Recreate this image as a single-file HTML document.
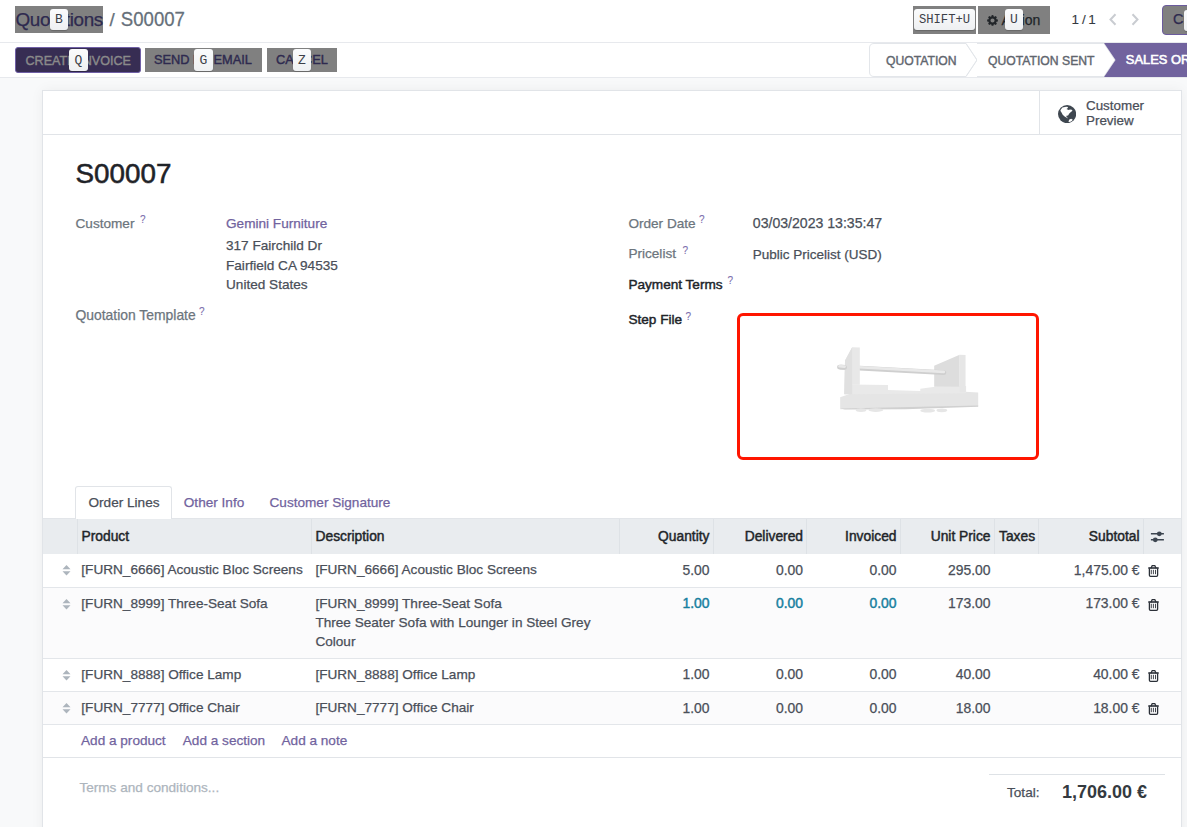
<!DOCTYPE html>
<html><head><meta charset="utf-8"><style>
html,body{margin:0;padding:0;width:1187px;height:827px;overflow:hidden;background:#fff;position:relative;font-family:"Liberation Sans",sans-serif}
.t{position:absolute;line-height:1;white-space:nowrap;-webkit-text-stroke:0.25px currentColor}
.r{position:absolute}
.key{position:absolute;background:linear-gradient(#fafbfc,#eef0f2);border-radius:3px;box-shadow:0 1px 1px rgba(0,0,0,.2);font-family:"Liberation Mono",monospace;font-size:13px;color:#3c4048;display:flex;align-items:center;justify-content:center;box-sizing:border-box}
</style></head><body>
<div class="r" style="left:0px;top:0px;width:1187px;height:42px;background:#fff"></div>
<div class="r" style="left:0px;top:42px;width:1187px;height:1px;background:#e7e9ed"></div>
<div class="r" style="left:0px;top:43px;width:1187px;height:34px;background:#fff"></div>
<div class="r" style="left:0px;top:77px;width:1187px;height:1px;background:#e7e9ed"></div>
<div class="r" style="left:15px;top:6px;width:88px;height:27px;background:#808080"></div>
<div class="t" style="left:15.50px;top:11.20px;font-size:18.9px;font-weight:400;color:#2e2a4f;font-family:'Liberation Sans', sans-serif;letter-spacing:-0.4px">Quotations</div>
<div class="t" style="left:109.50px;top:11.20px;font-size:18.9px;font-weight:400;color:#66707a;font-family:'Liberation Sans', sans-serif;">/</div>
<div class="t" style="left:120.80px;top:11.46px;font-size:18.6px;font-weight:400;color:#66707a;font-family:'Liberation Sans', sans-serif;transform:scaleY(1.04);transform-origin:0 100%">S00007</div>
<div class="key" style="left:50px;top:9px;width:18px;height:21px;">B</div>
<div class="r" style="left:913px;top:6px;width:63px;height:28px;background:#808080"></div>
<div class="key" style="left:914px;top:9px;width:61px;height:21px;font-size:12.2px;padding-top:1.5px">SHIFT+U</div>
<div class="r" style="left:978px;top:6px;width:72px;height:28px;background:#808080"></div>
<div class="t" style="left:1001.40px;top:12.95px;font-size:14px;font-weight:400;color:#212529;font-family:'Liberation Sans', sans-serif;">Action</div>
<svg class="r" style="left:987px;top:14.5px" width="11" height="11" viewBox="0 0 16 16"><path fill="#212529" d="M8 0l1.3 .2.4 2 1.2.5 1.7-1.1 1.8 1.8-1.1 1.7.5 1.2 2 .4V9.3l-2 .4-.5 1.2 1.1 1.7-1.8 1.8-1.7-1.1-1.2.5-.4 2H6.7l-.4-2-1.2-.5-1.7 1.1-1.8-1.8 1.1-1.7-.5-1.2-2-.4V6.7l2-.4.5-1.2L1.6 3.4 3.4 1.6l1.7 1.1 1.2-.5.4-2zM8 5a3 3 0 100 6 3 3 0 000-6z"/></svg>
<div class="key" style="left:1005px;top:9px;width:18px;height:21px;">U</div>
<div class="t" style="left:1071.50px;top:13.37px;font-size:13.5px;font-weight:400;color:#343a40;font-family:'Liberation Sans', sans-serif;-webkit-text-stroke:0.1px">1</div>
<div class="t" style="left:1082.00px;top:13.37px;font-size:13.5px;font-weight:400;color:#343a40;font-family:'Liberation Sans', sans-serif;-webkit-text-stroke:0.1px">/</div>
<div class="t" style="left:1088.30px;top:13.37px;font-size:13.5px;font-weight:400;color:#343a40;font-family:'Liberation Sans', sans-serif;-webkit-text-stroke:0.1px">1</div>
<svg class="r" style="left:1108px;top:13px" width="10" height="13" viewBox="0 0 10 13"><path d="M7.5 1.2L2.5 6.5 7.5 11.8" stroke="#c9ccd1" stroke-width="2" fill="none"/></svg>
<svg class="r" style="left:1130px;top:13px" width="10" height="13" viewBox="0 0 10 13"><path d="M2.5 1.2L7.5 6.5 2.5 11.8" stroke="#c9ccd1" stroke-width="2" fill="none"/></svg>
<div class="r" style="left:1162px;top:5px;width:40px;height:30px;background:#808080;border:1.5px solid #6b5b9e;border-radius:4px;box-sizing:border-box"></div>
<div class="t" style="left:1172.90px;top:12.23px;font-size:14.5px;font-weight:400;color:#2e2a4f;font-family:'Liberation Sans', sans-serif;">Cr</div>
<div class="key" style="left:1183.5px;top:9.5px;width:18px;height:21px;"></div>
<div class="r" style="left:15px;top:47px;width:126px;height:26px;background:#372d53;border:1px solid #6f5fa6;border-radius:3px;box-sizing:border-box"></div>
<div class="t" style="left:25.50px;top:54.63px;font-size:12.6px;font-weight:400;color:#8a8a8a;font-family:'Liberation Sans', sans-serif;-webkit-text-stroke:0.4px #8a8a8a">CREATE INVOICE</div>
<div class="key" style="left:69px;top:49px;width:19px;height:22px;">Q</div>
<div class="r" style="left:145px;top:48px;width:117px;height:24px;background:#808080"></div>
<div class="t" style="left:154.00px;top:54.46px;font-size:12.8px;font-weight:400;color:#2e2a4f;font-family:'Liberation Sans', sans-serif;-webkit-text-stroke:0.4px #2e2a4f">SEND BY EMAIL</div>
<div class="key" style="left:194px;top:49px;width:19px;height:22px;">G</div>
<div class="r" style="left:267px;top:48px;width:70px;height:24px;background:#808080"></div>
<div class="t" style="left:276.00px;top:54.46px;font-size:12.8px;font-weight:400;color:#2e2a4f;font-family:'Liberation Sans', sans-serif;-webkit-text-stroke:0.4px #2e2a4f">CANCEL</div>
<div class="key" style="left:293px;top:49px;width:18px;height:22px;">Z</div>
<svg class="r" style="left:860px;top:43px" width="327" height="34" viewBox="860 43 327 34">
<path d="M874 43.5 H966 L977 60 L966 76.5 H874 Q869.5 76.5 869.5 72 V48 Q869.5 43.5 874 43.5Z" fill="#fff" stroke="#e3e6ea" stroke-width="1"/>
<path d="M966 43.5 L977 60 L966 76.5" fill="none" stroke="#e3e6ea" stroke-width="1"/>
<path d="M977 43.5 H1104 L1115 60 L1104 76.5 H977" fill="#fff" stroke="#e3e6ea" stroke-width="1"/>
<path d="M1104 43 H1187 V77 H1104 L1115.5 60 Z" fill="#71639e"/>
</svg>
<div class="t" style="left:886.00px;top:54.57px;font-size:12.2px;font-weight:400;color:#5f666e;font-family:'Liberation Sans', sans-serif;-webkit-text-stroke:0.4px #5f666e">QUOTATION</div>
<div class="t" style="left:988.00px;top:54.57px;font-size:12.2px;font-weight:400;color:#5f666e;font-family:'Liberation Sans', sans-serif;-webkit-text-stroke:0.4px #5f666e">QUOTATION SENT</div>
<div class="t" style="left:1125.80px;top:53.98px;font-size:12.9px;font-weight:400;color:#ffffff;font-family:'Liberation Sans', sans-serif;-webkit-text-stroke:0.6px #ffffff">SALES ORDER</div>
<div class="r" style="left:0px;top:78px;width:1187px;height:749px;background:#f8f9fa"></div>
<div class="r" style="left:42px;top:90px;width:1140px;height:760px;background:#fff;border:1px solid #e1e4e8;box-sizing:border-box;box-shadow:0 0 12px rgba(0,0,0,0.05)"></div>
<div class="r" style="left:43px;top:134px;width:1138px;height:1px;background:#e1e4e8"></div>
<div class="r" style="left:1039px;top:91px;width:1px;height:43px;background:#e1e4e8"></div>
<svg class="r" style="left:1057.8px;top:104.5px" width="18.2" height="18.2" viewBox="0 0 18.2 18.2"><circle cx="9.1" cy="9.1" r="9.1" fill="#3f4750"/><path d="M2.5 5L4.4 2.5 8.2 1.7 10.1 2 9.4 3.5 8.4 4.1 10.7 5 11.9 4.4 13.8 4.7 14.5 5.7 12.6 7.2 11.3 8.5 10.1 10.4 8.5 10.7 8.2 11.3 9.7 12.9 10.1 13.5 6.6 11.6 4.7 9.7 3.5 7.5 2.5 5.9Z M10.4 16.7L11.3 14.5 13.2 13.7 14.8 14.8 13.8 16 11.9 17Z" fill="#fff"/></svg>
<div class="t" style="left:1086.00px;top:98.96px;font-size:13.4px;font-weight:400;color:#4a4f59;font-family:'Liberation Sans', sans-serif;">Customer</div>
<div class="t" style="left:1086.00px;top:113.96px;font-size:13.4px;font-weight:400;color:#4a4f59;font-family:'Liberation Sans', sans-serif;">Preview</div>
<div class="t" style="left:75.50px;top:159.67px;font-size:27.8px;font-weight:400;color:#1f2328;font-family:'Liberation Sans', sans-serif;-webkit-text-stroke:0.55px #1f2328">S00007</div>
<div class="t" style="left:75.50px;top:216.79px;font-size:13.6px;font-weight:400;color:#6c757d;font-family:'Liberation Sans', sans-serif;">Customer</div>
<div class="t" style="left:140.00px;top:215.03px;font-size:10px;font-weight:400;color:#7c6fae;font-family:'Liberation Sans', sans-serif;-webkit-text-stroke:0.1px #7c6fae">?</div>
<div class="t" style="left:226.00px;top:217.29px;font-size:13.6px;font-weight:400;color:#71639e;font-family:'Liberation Sans', sans-serif;">Gemini Furniture</div>
<div class="t" style="left:226.00px;top:238.99px;font-size:13.6px;font-weight:400;color:#4a4f59;font-family:'Liberation Sans', sans-serif;">317 Fairchild Dr</div>
<div class="t" style="left:226.00px;top:258.69px;font-size:13.6px;font-weight:400;color:#4a4f59;font-family:'Liberation Sans', sans-serif;">Fairfield CA 94535</div>
<div class="t" style="left:226.00px;top:278.09px;font-size:13.6px;font-weight:400;color:#4a4f59;font-family:'Liberation Sans', sans-serif;">United States</div>
<div class="t" style="left:75.50px;top:308.53px;font-size:13.9px;font-weight:400;color:#6c757d;font-family:'Liberation Sans', sans-serif;">Quotation Template</div>
<div class="t" style="left:199.00px;top:307.04px;font-size:10px;font-weight:400;color:#7c6fae;font-family:'Liberation Sans', sans-serif;-webkit-text-stroke:0.1px #7c6fae">?</div>
<div class="t" style="left:628.40px;top:216.79px;font-size:13.6px;font-weight:400;color:#6c757d;font-family:'Liberation Sans', sans-serif;">Order Date</div>
<div class="t" style="left:699.00px;top:214.53px;font-size:10px;font-weight:400;color:#7c6fae;font-family:'Liberation Sans', sans-serif;-webkit-text-stroke:0.1px #7c6fae">?</div>
<div class="t" style="left:752.80px;top:216.36px;font-size:14.1px;font-weight:400;color:#4a4f59;font-family:'Liberation Sans', sans-serif;">03/03/2023 13:35:47</div>
<div class="t" style="left:628.40px;top:247.49px;font-size:13.6px;font-weight:400;color:#6c757d;font-family:'Liberation Sans', sans-serif;">Pricelist</div>
<div class="t" style="left:682.50px;top:245.53px;font-size:10px;font-weight:400;color:#7c6fae;font-family:'Liberation Sans', sans-serif;-webkit-text-stroke:0.1px #7c6fae">?</div>
<div class="t" style="left:752.80px;top:247.57px;font-size:13.5px;font-weight:400;color:#4a4f59;font-family:'Liberation Sans', sans-serif;">Public Pricelist (USD)</div>
<div class="t" style="left:628.40px;top:277.99px;font-size:13.6px;font-weight:400;color:#212529;font-family:'Liberation Sans', sans-serif;-webkit-text-stroke:0.45px #212529">Payment Terms</div>
<div class="t" style="left:727.50px;top:276.04px;font-size:10px;font-weight:400;color:#7c6fae;font-family:'Liberation Sans', sans-serif;-webkit-text-stroke:0.1px #7c6fae">?</div>
<div class="t" style="left:628.40px;top:313.49px;font-size:13.6px;font-weight:400;color:#212529;font-family:'Liberation Sans', sans-serif;-webkit-text-stroke:0.45px #212529">Step File</div>
<div class="t" style="left:685.50px;top:311.54px;font-size:10px;font-weight:400;color:#7c6fae;font-family:'Liberation Sans', sans-serif;-webkit-text-stroke:0.1px #7c6fae">?</div>
<div class="r" style="left:737px;top:313px;width:302px;height:147px;border:3px solid #ff1500;border-radius:6px;box-sizing:border-box"></div>
<svg class="r" style="left:830px;top:340px" width="160" height="80" viewBox="0 0 1187 594">
<polygon points="75,425 150,400 1000,385 1100,390 1100,492 75,515" fill="#e5e5e5"/>
<polygon points="75,508 1100,486 1100,496 560,514 110,516" fill="#d0d0d0"/>
<polygon points="150,330 430,335 430,372 670,378 670,362 780,348 1010,342 1010,395 150,402" fill="#e9e9e9"/>
<polygon points="773,191 962,109 962,347 773,347" fill="#dddddd"/>
<polygon points="962,109 1006,111 1006,388 962,388" fill="#e6e6e6"/>
<path d="M80,201 L845,242" stroke="#cfcfcf" stroke-width="36" stroke-linecap="round"/>
<path d="M80,195 L845,236" stroke="#e9e9e9" stroke-width="20" stroke-linecap="round"/>
<polygon points="111,153 164,53 221,55 221,332 150,332 150,402 105,402" fill="#e8e8e8"/>
<polygon points="111,153 164,53 164,402 105,402" fill="#e0e0e0"/>
<path d="M70,201 L108,203" stroke="#cfcfcf" stroke-width="36" stroke-linecap="round"/>
<path d="M70,195 L108,197" stroke="#e9e9e9" stroke-width="20" stroke-linecap="round"/>
<ellipse cx="230" cy="520" rx="40" ry="14" fill="#e6e6e6"/>
<ellipse cx="340" cy="520" rx="55" ry="14" fill="#e6e6e6"/>
<ellipse cx="725" cy="525" rx="55" ry="14" fill="#e6e6e6"/>
<ellipse cx="830" cy="522" rx="40" ry="14" fill="#e6e6e6"/>
</svg>
<div class="r" style="left:75px;top:486px;width:97px;height:33px;background:#fff;border:1px solid #e1e4e8;border-bottom:none;border-radius:3px 3px 0 0;box-sizing:border-box"></div>
<div class="t" style="left:88.50px;top:496.09px;font-size:13.6px;font-weight:400;color:#4a4f59;font-family:'Liberation Sans', sans-serif;">Order Lines</div>
<div class="t" style="left:183.80px;top:496.09px;font-size:13.6px;font-weight:400;color:#71639e;font-family:'Liberation Sans', sans-serif;">Other Info</div>
<div class="t" style="left:269.50px;top:496.09px;font-size:13.6px;font-weight:400;color:#71639e;font-family:'Liberation Sans', sans-serif;">Customer Signature</div>
<div class="r" style="left:43px;top:519px;width:1138px;height:35px;background:#e9ecef"></div>
<div class="r" style="left:43px;top:518px;width:32px;height:1px;background:#e2e5e9"></div>
<div class="r" style="left:172px;top:518px;width:1009px;height:1px;background:#e2e5e9"></div>
<div class="r" style="left:77px;top:519px;width:1px;height:35px;background:#dee2e6"></div>
<div class="r" style="left:311px;top:519px;width:1px;height:35px;background:#dee2e6"></div>
<div class="r" style="left:619px;top:519px;width:1px;height:35px;background:#dee2e6"></div>
<div class="r" style="left:713px;top:519px;width:1px;height:35px;background:#dee2e6"></div>
<div class="r" style="left:806px;top:519px;width:1px;height:35px;background:#dee2e6"></div>
<div class="r" style="left:900px;top:519px;width:1px;height:35px;background:#dee2e6"></div>
<div class="r" style="left:994px;top:519px;width:1px;height:35px;background:#dee2e6"></div>
<div class="r" style="left:1038px;top:519px;width:1px;height:35px;background:#dee2e6"></div>
<div class="r" style="left:1143px;top:519px;width:1px;height:35px;background:#dee2e6"></div>
<div class="t" style="left:81.50px;top:529.82px;font-size:13.8px;font-weight:400;color:#212529;font-family:'Liberation Sans', sans-serif;-webkit-text-stroke:0.45px #212529">Product</div>
<div class="t" style="left:315.50px;top:529.82px;font-size:13.8px;font-weight:400;color:#212529;font-family:'Liberation Sans', sans-serif;-webkit-text-stroke:0.45px #212529">Description</div>
<div class="t" style="right:477.50px;top:529.82px;font-size:13.8px;font-weight:400;color:#212529;font-family:'Liberation Sans', sans-serif;-webkit-text-stroke:0.45px #212529">Quantity</div>
<div class="t" style="right:384.00px;top:529.82px;font-size:13.8px;font-weight:400;color:#212529;font-family:'Liberation Sans', sans-serif;-webkit-text-stroke:0.45px #212529">Delivered</div>
<div class="t" style="right:290.50px;top:529.82px;font-size:13.8px;font-weight:400;color:#212529;font-family:'Liberation Sans', sans-serif;-webkit-text-stroke:0.45px #212529">Invoiced</div>
<div class="t" style="right:196.50px;top:529.82px;font-size:13.8px;font-weight:400;color:#212529;font-family:'Liberation Sans', sans-serif;-webkit-text-stroke:0.45px #212529">Unit Price</div>
<div class="t" style="left:999.00px;top:529.82px;font-size:13.8px;font-weight:400;color:#212529;font-family:'Liberation Sans', sans-serif;-webkit-text-stroke:0.45px #212529">Taxes</div>
<div class="t" style="right:47.50px;top:529.82px;font-size:13.8px;font-weight:400;color:#212529;font-family:'Liberation Sans', sans-serif;-webkit-text-stroke:0.45px #212529">Subtotal</div>
<svg class="r" style="left:1150px;top:530px" width="15" height="13" viewBox="0 0 15 13"><path d="M0.9 3.8h13M0.9 9.8h13" stroke="#3c4550" stroke-width="1.5"/><circle cx="9.3" cy="3.8" r="2.4" fill="#3c4550"/><circle cx="5.3" cy="9.8" r="2.4" fill="#3c4550"/></svg>
<div class="r" style="left:43px;top:554px;width:1138px;height:33px;background:#fff"></div>
<div class="r" style="left:43px;top:587px;width:1138px;height:71px;background:#fbfbfc"></div>
<div class="r" style="left:43px;top:658px;width:1138px;height:33px;background:#fff"></div>
<div class="r" style="left:43px;top:691px;width:1138px;height:33px;background:#fbfbfc"></div>
<div class="r" style="left:43px;top:587px;width:1138px;height:1px;background:#e3e6ea"></div>
<div class="r" style="left:43px;top:658px;width:1138px;height:1px;background:#e3e6ea"></div>
<div class="r" style="left:43px;top:691px;width:1138px;height:1px;background:#e3e6ea"></div>
<div class="r" style="left:43px;top:724px;width:1138px;height:1px;background:#e3e6ea"></div>
<svg class="r" style="left:62px;top:564.9px" width="9" height="11" viewBox="0 0 9 11"><path d="M4.5 0L8.5 4.3H0.5Z M0.5 6.2H8.5L4.5 10.5Z" fill="#adb5bd"/></svg>
<div class="t" style="left:81.30px;top:563.39px;font-size:13.6px;font-weight:400;color:#4a4f59;font-family:'Liberation Sans', sans-serif;">[FURN_6666] Acoustic Bloc Screens</div>
<div class="t" style="left:315.40px;top:563.39px;font-size:13.6px;font-weight:400;color:#4a4f59;font-family:'Liberation Sans', sans-serif;">[FURN_6666] Acoustic Bloc Screens</div>
<div class="t" style="right:477.50px;top:563.53px;font-size:13.9px;font-weight:400;color:#4a4f59;font-family:'Liberation Sans', sans-serif;">5.00</div>
<div class="t" style="right:384.00px;top:563.53px;font-size:13.9px;font-weight:400;color:#4a4f59;font-family:'Liberation Sans', sans-serif;">0.00</div>
<div class="t" style="right:290.50px;top:563.53px;font-size:13.9px;font-weight:400;color:#4a4f59;font-family:'Liberation Sans', sans-serif;">0.00</div>
<div class="t" style="right:196.50px;top:563.53px;font-size:13.9px;font-weight:400;color:#4a4f59;font-family:'Liberation Sans', sans-serif;">295.00</div>
<div class="t" style="right:47.50px;top:563.53px;font-size:13.9px;font-weight:400;color:#4a4f59;font-family:'Liberation Sans', sans-serif;">1,475.00 €</div>
<svg class="r" style="left:1147.5px;top:563.9px" width="11" height="13" viewBox="0 0 11 13"><path d="M0.3 4H10.7" stroke="#2b3038" stroke-width="1.6"/><path d="M3 4.2L4.2 1.6H6.8L8 4.2" stroke="#2b3038" stroke-width="1.3" fill="none"/><path d="M1.4 4.2V11.2Q1.4 12.3 2.5 12.3H8.5Q9.6 12.3 9.6 11.2V4.2" stroke="#2b3038" stroke-width="1.3" fill="none"/><path d="M3.3 5.8V10.2M5.4 5.8V10.2M7.5 5.8V10.2" stroke="#2b3038" stroke-width="0.9"/></svg>
<svg class="r" style="left:62px;top:598.5px" width="9" height="11" viewBox="0 0 9 11"><path d="M4.5 0L8.5 4.3H0.5Z M0.5 6.2H8.5L4.5 10.5Z" fill="#adb5bd"/></svg>
<div class="t" style="left:81.30px;top:596.99px;font-size:13.6px;font-weight:400;color:#4a4f59;font-family:'Liberation Sans', sans-serif;">[FURN_8999] Three-Seat Sofa</div>
<div class="t" style="left:315.40px;top:596.99px;font-size:13.6px;font-weight:400;color:#4a4f59;font-family:'Liberation Sans', sans-serif;">[FURN_8999] Three-Seat Sofa</div>
<div class="t" style="left:315.40px;top:616.19px;font-size:13.6px;font-weight:400;color:#4a4f59;font-family:'Liberation Sans', sans-serif;">Three Seater Sofa with Lounger in Steel Grey</div>
<div class="t" style="left:315.40px;top:635.39px;font-size:13.6px;font-weight:400;color:#4a4f59;font-family:'Liberation Sans', sans-serif;">Colour</div>
<div class="t" style="right:477.50px;top:597.13px;font-size:13.9px;font-weight:400;color:#17809f;font-family:'Liberation Sans', sans-serif;-webkit-text-stroke:0.45px #17809f">1.00</div>
<div class="t" style="right:384.00px;top:597.13px;font-size:13.9px;font-weight:400;color:#17809f;font-family:'Liberation Sans', sans-serif;-webkit-text-stroke:0.45px #17809f">0.00</div>
<div class="t" style="right:290.50px;top:597.13px;font-size:13.9px;font-weight:400;color:#17809f;font-family:'Liberation Sans', sans-serif;-webkit-text-stroke:0.45px #17809f">0.00</div>
<div class="t" style="right:196.50px;top:597.13px;font-size:13.9px;font-weight:400;color:#4a4f59;font-family:'Liberation Sans', sans-serif;">173.00</div>
<div class="t" style="right:47.50px;top:597.13px;font-size:13.9px;font-weight:400;color:#4a4f59;font-family:'Liberation Sans', sans-serif;">173.00 €</div>
<svg class="r" style="left:1147.5px;top:597.5px" width="11" height="13" viewBox="0 0 11 13"><path d="M0.3 4H10.7" stroke="#2b3038" stroke-width="1.6"/><path d="M3 4.2L4.2 1.6H6.8L8 4.2" stroke="#2b3038" stroke-width="1.3" fill="none"/><path d="M1.4 4.2V11.2Q1.4 12.3 2.5 12.3H8.5Q9.6 12.3 9.6 11.2V4.2" stroke="#2b3038" stroke-width="1.3" fill="none"/><path d="M3.3 5.8V10.2M5.4 5.8V10.2M7.5 5.8V10.2" stroke="#2b3038" stroke-width="0.9"/></svg>
<svg class="r" style="left:62px;top:669.7px" width="9" height="11" viewBox="0 0 9 11"><path d="M4.5 0L8.5 4.3H0.5Z M0.5 6.2H8.5L4.5 10.5Z" fill="#adb5bd"/></svg>
<div class="t" style="left:81.30px;top:668.19px;font-size:13.6px;font-weight:400;color:#4a4f59;font-family:'Liberation Sans', sans-serif;">[FURN_8888] Office Lamp</div>
<div class="t" style="left:315.40px;top:668.19px;font-size:13.6px;font-weight:400;color:#4a4f59;font-family:'Liberation Sans', sans-serif;">[FURN_8888] Office Lamp</div>
<div class="t" style="right:477.50px;top:668.33px;font-size:13.9px;font-weight:400;color:#4a4f59;font-family:'Liberation Sans', sans-serif;">1.00</div>
<div class="t" style="right:384.00px;top:668.33px;font-size:13.9px;font-weight:400;color:#4a4f59;font-family:'Liberation Sans', sans-serif;">0.00</div>
<div class="t" style="right:290.50px;top:668.33px;font-size:13.9px;font-weight:400;color:#4a4f59;font-family:'Liberation Sans', sans-serif;">0.00</div>
<div class="t" style="right:196.50px;top:668.33px;font-size:13.9px;font-weight:400;color:#4a4f59;font-family:'Liberation Sans', sans-serif;">40.00</div>
<div class="t" style="right:47.50px;top:668.33px;font-size:13.9px;font-weight:400;color:#4a4f59;font-family:'Liberation Sans', sans-serif;">40.00 €</div>
<svg class="r" style="left:1147.5px;top:668.7px" width="11" height="13" viewBox="0 0 11 13"><path d="M0.3 4H10.7" stroke="#2b3038" stroke-width="1.6"/><path d="M3 4.2L4.2 1.6H6.8L8 4.2" stroke="#2b3038" stroke-width="1.3" fill="none"/><path d="M1.4 4.2V11.2Q1.4 12.3 2.5 12.3H8.5Q9.6 12.3 9.6 11.2V4.2" stroke="#2b3038" stroke-width="1.3" fill="none"/><path d="M3.3 5.8V10.2M5.4 5.8V10.2M7.5 5.8V10.2" stroke="#2b3038" stroke-width="0.9"/></svg>
<svg class="r" style="left:62px;top:703px" width="9" height="11" viewBox="0 0 9 11"><path d="M4.5 0L8.5 4.3H0.5Z M0.5 6.2H8.5L4.5 10.5Z" fill="#adb5bd"/></svg>
<div class="t" style="left:81.30px;top:701.49px;font-size:13.6px;font-weight:400;color:#4a4f59;font-family:'Liberation Sans', sans-serif;">[FURN_7777] Office Chair</div>
<div class="t" style="left:315.40px;top:701.49px;font-size:13.6px;font-weight:400;color:#4a4f59;font-family:'Liberation Sans', sans-serif;">[FURN_7777] Office Chair</div>
<div class="t" style="right:477.50px;top:701.63px;font-size:13.9px;font-weight:400;color:#4a4f59;font-family:'Liberation Sans', sans-serif;">1.00</div>
<div class="t" style="right:384.00px;top:701.63px;font-size:13.9px;font-weight:400;color:#4a4f59;font-family:'Liberation Sans', sans-serif;">0.00</div>
<div class="t" style="right:290.50px;top:701.63px;font-size:13.9px;font-weight:400;color:#4a4f59;font-family:'Liberation Sans', sans-serif;">0.00</div>
<div class="t" style="right:196.50px;top:701.63px;font-size:13.9px;font-weight:400;color:#4a4f59;font-family:'Liberation Sans', sans-serif;">18.00</div>
<div class="t" style="right:47.50px;top:701.63px;font-size:13.9px;font-weight:400;color:#4a4f59;font-family:'Liberation Sans', sans-serif;">18.00 €</div>
<svg class="r" style="left:1147.5px;top:702.0px" width="11" height="13" viewBox="0 0 11 13"><path d="M0.3 4H10.7" stroke="#2b3038" stroke-width="1.6"/><path d="M3 4.2L4.2 1.6H6.8L8 4.2" stroke="#2b3038" stroke-width="1.3" fill="none"/><path d="M1.4 4.2V11.2Q1.4 12.3 2.5 12.3H8.5Q9.6 12.3 9.6 11.2V4.2" stroke="#2b3038" stroke-width="1.3" fill="none"/><path d="M3.3 5.8V10.2M5.4 5.8V10.2M7.5 5.8V10.2" stroke="#2b3038" stroke-width="0.9"/></svg>
<div class="t" style="left:81.00px;top:733.79px;font-size:13.6px;font-weight:400;color:#71639e;font-family:'Liberation Sans', sans-serif;">Add a product</div>
<div class="t" style="left:182.80px;top:733.79px;font-size:13.6px;font-weight:400;color:#71639e;font-family:'Liberation Sans', sans-serif;">Add a section</div>
<div class="t" style="left:281.50px;top:733.79px;font-size:13.6px;font-weight:400;color:#71639e;font-family:'Liberation Sans', sans-serif;">Add a note</div>
<div class="r" style="left:43px;top:757px;width:1138px;height:1px;background:#e1e4e8"></div>
<div class="t" style="left:79.40px;top:780.99px;font-size:13.6px;font-weight:400;color:#adb5bd;font-family:'Liberation Sans', sans-serif;">Terms and conditions...</div>
<div class="r" style="left:989px;top:774px;width:176px;height:1px;background:#dee2e6"></div>
<div class="t" style="left:1007.00px;top:785.99px;font-size:13.6px;font-weight:400;color:#4a4f59;font-family:'Liberation Sans', sans-serif;">Total:</div>
<div class="t" style="right:40.00px;top:783.26px;font-size:18px;font-weight:700;color:#343a40;font-family:'Liberation Sans', sans-serif;-webkit-text-stroke:0;">1,706.00 €</div>
</body></html>
